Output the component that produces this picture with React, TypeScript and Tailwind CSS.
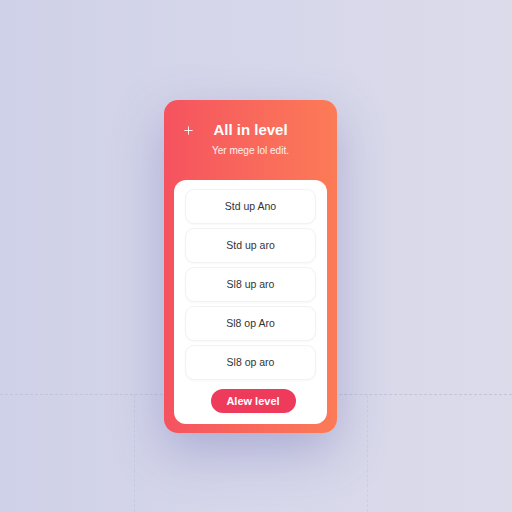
import { Plus } from 'lucide-react'

const levels = ['Std up Ano', 'Std up aro', 'Sl8 up aro', 'Sl8 op Aro', 'Sl8 op aro']

export default function App() {
  return (
    <div
      className="relative w-[512px] h-[512px] overflow-hidden bg-gradient-to-r from-[#cfd1e8] via-[#d6d7ea] to-[#dcdbea]"
      style={{ fontFamily: '"Liberation Sans", Arial, sans-serif' }}
    >
      {/* guide lines on the canvas */}
      <div className="absolute left-0 right-0 top-[394px] border-t border-dashed border-[#c2c4dc]" />
      <div className="absolute left-[134px] top-[395px] bottom-0 border-l border-dashed border-[#c8cae2]" />
      <div className="absolute left-[367px] top-[395px] bottom-0 border-l border-dashed border-[#cdcfe4]" />

      <div className="relative flex pl-[164px] pt-[100px]">
        <div className="w-[173px] h-[333px] rounded-[14px] bg-gradient-to-r from-[#f5525f] to-[#fc7b57] shadow-[0_18px_50px_rgba(95,95,170,0.35)] flex flex-col">
          {/* header */}
          <div className="relative h-[80px] flex flex-col items-center pt-[20px] text-white">
            <Plus className="absolute left-[18px] top-[24px] w-[13px] h-[13px]" strokeWidth={1.6} />
            <h1 className="text-[15px] font-bold leading-[20px]">All in level</h1>
            <p className="text-[10px] leading-[14px] mt-[4px] text-white/90">Yer mege lol edit.</p>
          </div>

          {/* level list */}
          <div className="mx-[10px] mb-[9px] flex-1 rounded-[12px] bg-white px-[11px] pt-[9px] flex flex-col">
            <div className="flex flex-col gap-[4px]">
              {levels.map((l, i) => (
                <div
                  key={i}
                  className="h-[35px] rounded-[9px] border border-[#f2f2f5] bg-white shadow-[0_1px_2px_rgba(0,0,0,0.03)] flex items-center justify-center text-[10.5px] text-[#333]"
                >
                  {l}
                </div>
              ))}
            </div>
            <div className="flex justify-center mt-[9px] pl-[5px]">
              <button className="w-[85px] h-[24px] rounded-full bg-[#ee3a5b] text-white text-[11px] font-bold">
                Alew level
              </button>
            </div>
          </div>
        </div>
      </div>
    </div>
  )
}
